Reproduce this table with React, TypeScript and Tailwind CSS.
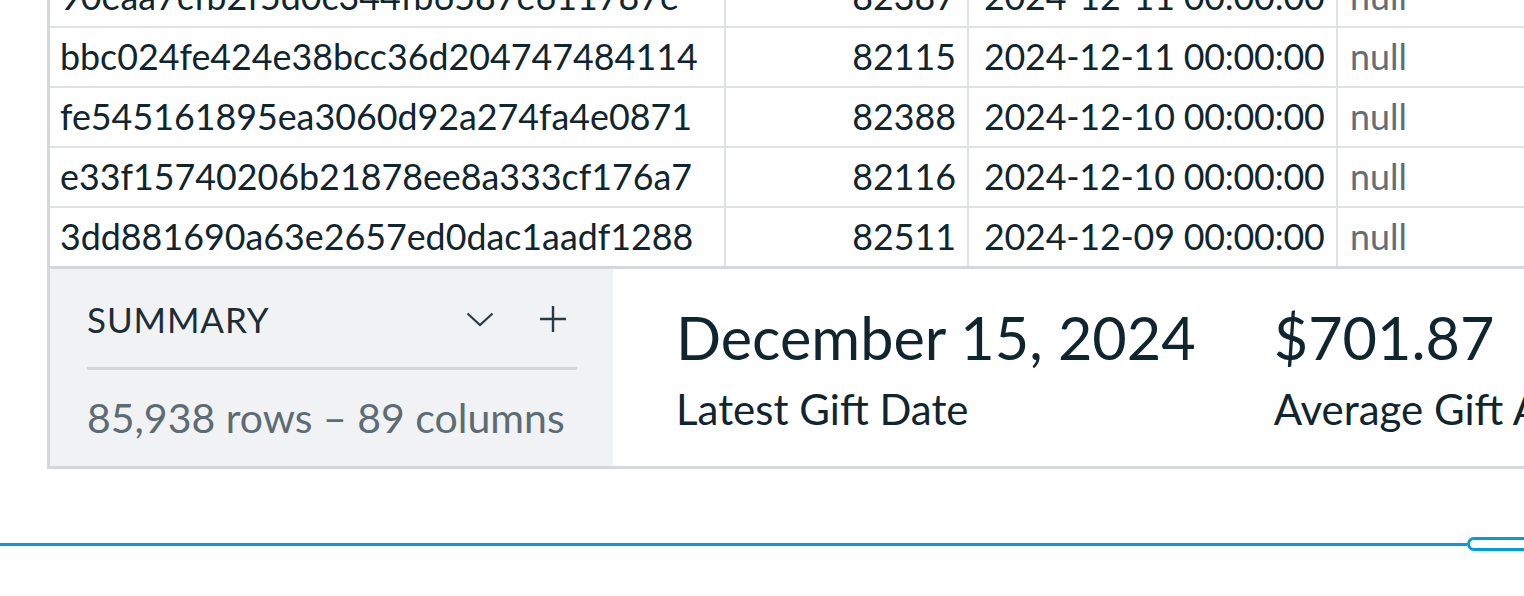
const rows = [
  { id: "90eaa7cfb2f5d0c344fb6587e611787e", num: "82387", date: "2024-12-11 00:00:00" },
  { id: "bbc024fe424e38bcc36d204747484114", num: "82115", date: "2024-12-11 00:00:00" },
  { id: "fe545161895ea3060d92a274fa4e0871", num: "82388", date: "2024-12-10 00:00:00" },
  { id: "e33f15740206b21878ee8a333cf176a7", num: "82116", date: "2024-12-10 00:00:00" },
  { id: "3dd881690a63e2657ed0dac1aadf1288", num: "82511", date: "2024-12-09 00:00:00" },
];

const stats = [
  { value: "December 15, 2024", label: "Latest Gift Date" },
  { value: "$701.87", label: "Average Gift Amount" },
];

const Row = ({ row, last }: { row: (typeof rows)[number]; last: boolean }) => (
  <div
    className={`flex text-[35.8px] text-[#0f2530] ${
      last ? "h-[58px]" : "h-[60px] border-b-2 border-[#dfe2e5]"
    }`}
  >
    <div className="w-[676px] shrink-0 flex items-center pl-[10px] border-r-2 border-[#dfe2e5]">
      {row.id}
    </div>
    <div className="w-[243px] shrink-0 flex items-center justify-end pr-[11px] border-r-2 border-[#dfe2e5]">
      {row.num}
    </div>
    <div className="w-[369px] shrink-0 flex items-center pl-[15px] border-r-2 border-[#dfe2e5] tracking-[-0.2px]">
      {row.date}
    </div>
    <div className="flex-1 flex items-center pl-[12px] text-[#5f6e77]">null</div>
  </div>
);

const Summary = () => (
  <div className="flex h-[203px] border-y-[3px] border-[#d3d6da]">
    <div className="w-[563px] shrink-0 bg-[#f1f2f4] pl-[37px] pr-[36px] pt-[27px] flex flex-col">
      <div className="h-[46px] flex items-center justify-between">
        <span className="text-[35px] text-[#1c2d38] tracking-[0.9px]">SUMMARY</span>
        <div className="flex items-center gap-[46px] mr-[11px]">
          <svg width="28" height="15" viewBox="0 0 28 15" fill="none">
            <path d="M1.5 1.5 L14 13 L26.5 1.5" stroke="#2a3a44" strokeWidth="2.2" />
          </svg>
          <svg width="26" height="26" viewBox="0 0 26 26" fill="none">
            <path d="M13 0 V26 M0 13 H26" stroke="#2a3a44" strokeWidth="2.4" />
          </svg>
        </div>
      </div>
      <div className="mt-[25px] h-[3px] bg-[#d3d6da]" />
      <div className="mt-[17px] text-[41px] text-[#5d6b74] whitespace-nowrap">
        85,938 rows – 89 columns
      </div>
    </div>
    <div className="flex-1 flex gap-[78px] pl-[63px] pt-[32px] whitespace-nowrap">
      {stats.map((s) => (
        <div key={s.label} className="flex flex-col text-[#0f2530]">
          <span className="text-[59.4px] leading-[72px]">{s.value}</span>
          <span className="mt-[11px] text-[42px] leading-[50px]">{s.label}</span>
        </div>
      ))}
    </div>
  </div>
);

export default function App() {
  return (
    <div className="w-[1524px] h-[596px] overflow-hidden bg-white font-['Lato',sans-serif]">
      <div className="w-[1700px] -mt-[32px] ml-[47px] border-l-[3px] border-[#d3d6da]">
        {rows.map((row, i) => (
          <Row key={row.id} row={row} last={i === rows.length - 1} />
        ))}
        <Summary />
      </div>
      <div className="w-[1547px] mt-[68px] h-[14px] flex items-center">
        <div className="flex-1 h-[3px] bg-[#009ee0]" />
        <div className="w-[80px] h-[14px] shrink-0 rounded-full border-[3px] border-[#009ee0] bg-white" />
      </div>
    </div>
  );
}
